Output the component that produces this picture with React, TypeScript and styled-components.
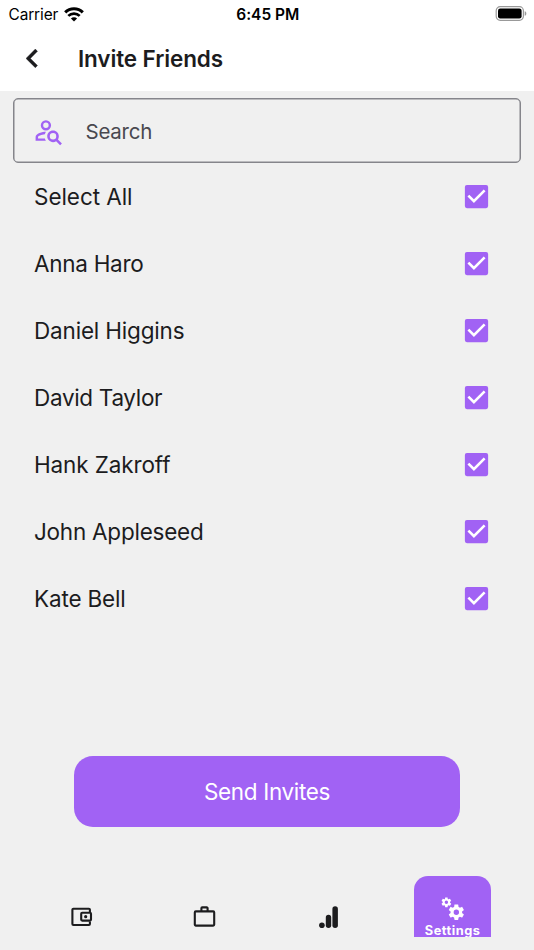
import React, { useState } from "react";
import styled, { createGlobalStyle } from "styled-components";

const PURPLE = "#a162f4";
const INK = "#1c1c1e";

const GlobalStyle = createGlobalStyle`
  *, *::before, *::after { box-sizing: border-box; }
  body {
    margin: 0;
    background: #f0f0f0;
    font-family: Inter, "Liberation Sans", sans-serif;
    color: ${INK};
  }
  button, input { font: inherit; color: inherit; }
`;

const Screen = styled.div`
  display: flex;
  flex-direction: column;
  width: 534px;
  height: 950px;
  overflow: hidden;
  background: #f0f0f0;
`;

const StatusBar = styled.div`
  display: grid;
  grid-template-columns: 1fr auto 1fr;
  align-items: center;
  height: 27px;
  padding: 0 7px 0 8.5px;
  background: #fff;
  color: #000;
`;

const Carrier = styled.div`
  display: flex;
  align-items: center;
  gap: 5.5px;
  padding-top: 1px;
  font-size: 15.4px;
  letter-spacing: -0.1px;
`;

const Clock = styled.div`
  padding-top: 1px;
  font-size: 15.5px;
  font-weight: 600;
  letter-spacing: -0.05px;
`;

const BatterySlot = styled.div`
  display: flex;
  justify-content: flex-end;
`;

const Header = styled.header`
  display: flex;
  align-items: center;
  height: 63.5px;
  padding-left: 26.2px;
  background: #fff;
`;

const BackButton = styled.button`
  display: flex;
  width: 51.8px;
  padding: 0;
  border: 0;
  background: none;
`;

const Title = styled.h1`
  margin: 0;
  font-size: 22.5px;
  font-weight: 600;
  letter-spacing: -0.12px;
`;

const SearchField = styled.label`
  display: flex;
  align-items: center;
  gap: 21.5px;
  height: 65px;
  margin: 7.5px 13px 0;
  padding-left: 19px;
  border: 1px solid #85858b;
  border-radius: 5px;
  box-shadow: inset 0 0 0 0.5px #85858b;
`;

const SearchInput = styled.input`
  flex: 1;
  min-width: 0;
  padding: 1px 0 0;
  border: 0;
  outline: 0;
  background: none;
  font-size: 20.5px;
  letter-spacing: -0.25px;
  &::placeholder { color: #49484f; opacity: 1; }
`;

const FriendList = styled.ul`
  margin: 0;
  padding: 0;
  list-style: none;
`;

const FriendRow = styled.li`
  display: flex;
  align-items: center;
  justify-content: space-between;
  height: 67.03px;
  padding: 0 41.9px 0 34px;
`;

const FriendName = styled.span<{ $tracking: number }>`
  font-size: 22.5px;
  letter-spacing: ${(p) => p.$tracking}px;
`;

const CheckButton = styled.button`
  display: flex;
  padding: 0;
  border: 0;
  background: none;
`;

const Footer = styled.div`
  display: flex;
  flex: 1;
  flex-direction: column;
  justify-content: flex-end;
`;

const SendButton = styled.button`
  align-self: center;
  width: 386.6px;
  height: 71px;
  margin-bottom: 49px;
  padding: 0;
  border: 0;
  border-radius: 19px;
  background: ${PURPLE};
  color: #fff;
  font-size: 22.5px;
  letter-spacing: -0.34px;
`;

const TabBar = styled.nav`
  display: grid;
  grid-template-columns: repeat(4, 123.6px);
  height: 61px;
  margin-bottom: 13px;
  padding-left: 20px;
  overflow: hidden;
`;

const Tab = styled.div`
  display: flex;
  justify-content: center;
  padding-top: 29px;
`;

const ActiveTab = styled.div`
  display: flex;
  flex-direction: column;
  align-items: center;
  justify-self: center;
  width: 77px;
  height: 77px;
  padding-top: 20px;
  border-radius: 14px;
  background: ${PURPLE};
  color: #fff;
`;

const TabLabel = styled.span`
  margin-top: 1px;
  font-size: 12.8px;
  font-weight: 700;
  line-height: 16px;
  letter-spacing: 0.5px;
`;

const WifiIcon = () => (
  <svg width="20" height="15" viewBox="0 0 20 15" fill="none" stroke="#000" strokeWidth="3.1">
    <path d="M1.2 5.3a12.6 12.6 0 0 1 17.6 0" />
    <path d="M4.3 8.9a8.2 8.2 0 0 1 11.4 0" strokeWidth="2.7" />
    <path d="M10 14.5 6.9 11.5a4.4 4.4 0 0 1 6.2 0z" fill="#000" stroke="none" />
  </svg>
);

const BatteryIcon = () => (
  <svg width="32" height="15" viewBox="0 0 32 15">
    <rect x="1.2" y=".7" width="27.2" height="13.6" rx="4" fill="none" stroke="#999" strokeWidth="1.2" />
    <rect x="3" y="2.5" width="23.6" height="10" rx="2.2" />
    <path d="M29.7 5.2c2.2.7 2.2 3.9 0 4.6z" fill="#999" />
  </svg>
);

const BackIcon = () => (
  <svg width="11.5" height="18.8" viewBox="8 6 7.41 12" fill={INK}>
    <path d="M15.41 16.58 10.83 12l4.58-4.59L14 6l-6 6 6 6z" stroke={INK} strokeWidth=".25" />
  </svg>
);

const PersonSearchIcon = () => (
  <svg width="31" height="31" viewBox="0 0 24 24" fill={PURPLE}>
    <path d="M10 13c-.35.59-.64 1.24-.81 1.93C6.5 15.16 3.9 16.42 3.9 17v1.1h5.3c.17.68.45 1.32.8 1.9H2v-3c0-2.66 5.33-4 8-4m0-9a4 4 0 1 1 0 8 4 4 0 0 1 0-8m0 1.9a2.1 2.1 0 1 0 0 4.2 2.1 2.1 0 0 0 0-4.2m5.5 6.1c2.5 0 4.5 2 4.5 4.5 0 .88-.25 1.71-.69 2.4l3.08 3.1L21 23.39l-3.12-3.07c-.69.43-1.51.68-2.38.68-2.5 0-4.5-2-4.5-4.5s2-4.5 4.5-4.5m0 2a2.5 2.5 0 1 0 0 5 2.5 2.5 0 0 0 0-5" />
  </svg>
);

const CheckIcon = ({ checked }: { checked: boolean }) => (
  <svg width="31" height="31" viewBox="0 0 24 24" fill={PURPLE}>
    {checked ? (
      <>
        <rect x="3" y="3" width="18" height="18" rx="1.6" />
        <path d="M10 17l-5-5 1.41-1.42L10 14.17l7.59-7.59L19 8z" fill="#fff" />
      </>
    ) : (
      <path d="M19 3H5a2 2 0 0 0-2 2v14a2 2 0 0 0 2 2h14a2 2 0 0 0 2-2V5a2 2 0 0 0-2-2m0 2v14H5V5z" />
    )}
  </svg>
);

const WalletIcon = () => (
  <svg width="24" height="24" viewBox="0 0 24 24" fill="none" stroke={INK} strokeWidth="2.1">
    <path d="M19.9 7.2V4.7a1 1 0 0 0-1-1H3.4a1 1 0 0 0-1 1v14.3a1 1 0 0 0 1 1h15.5a1 1 0 0 0 1-1v-2.4" />
    <rect x="11.2" y="7.8" width="9.8" height="7.8" rx="1" />
    <circle cx="15.7" cy="11.7" r="1.6" fill={INK} stroke="none" />
  </svg>
);

const BriefcaseIcon = () => (
  <svg width="24" height="24" viewBox="0 0 24 24" fill="none" stroke={INK} strokeWidth="2.1">
    <rect x="1.8" y="6.4" width="19.4" height="14.2" rx="1" />
    <path d="M8.4 6.4V3.2a.8.8 0 0 1 .8-.8h4.6a.8.8 0 0 1 .8.8v3.2" />
  </svg>
);

const AnalyticsIcon = () => (
  <svg width="24" height="24" viewBox="0 0 24 24" fill={INK}>
    <circle cx="4.9" cy="20.2" r="2.8" />
    <rect x="8.8" y="9.7" width="5.4" height="13.3" rx="2.7" />
    <rect x="15.4" y="1.3" width="5.5" height="21.7" rx="2.75" />
  </svg>
);

const COG =
  "M12 15.5a3.5 3.5 0 1 1 0-7 3.5 3.5 0 0 1 0 7m7.43-2.53c.04-.32.07-.64.07-.97s-.03-.66-.07-1l2.11-1.63c.19-.15.24-.42.12-.64l-2-3.46c-.12-.22-.39-.31-.61-.22l-2.49 1c-.52-.39-1.06-.73-1.69-.98l-.37-2.65A.506.506 0 0 0 14 2h-4c-.25 0-.46.18-.5.42l-.37 2.65c-.63.25-1.17.59-1.69.98l-2.49-1c-.22-.09-.49 0-.61.22l-2 3.46c-.13.22-.07.49.12.64L4.57 11c-.04.34-.07.67-.07 1s.03.65.07.97l-2.11 1.66c-.19.15-.25.42-.12.64l2 3.46c.12.22.39.3.61.22l2.49-1.01c.52.4 1.06.74 1.69.99l.37 2.65c.04.24.25.42.5.42h4c.25 0 .46-.18.5-.42l.37-2.65c.63-.26 1.17-.59 1.69-.99l2.49 1.01c.22.08.49 0 .61-.22l2-3.46c.12-.22.07-.49-.12-.64z";

const CogsIcon = () => (
  <svg width="26" height="26" viewBox="0 0 26 26" fill="#fff">
    <path transform="translate(.5 .4) scale(.49)" d={COG} />
    <path transform="translate(7.1 7) scale(.77)" d={COG} />
  </svg>
);

const FRIENDS = [
  { name: "Select All", tracking: -0.06 },
  { name: "Anna Haro", tracking: -0.28 },
  { name: "Daniel Higgins", tracking: -0.18 },
  { name: "David Taylor", tracking: -0.32 },
  { name: "Hank Zakroff", tracking: -0.12 },
  { name: "John Appleseed", tracking: -0.24 },
  { name: "Kate Bell", tracking: -0.16 },
];

export default function App() {
  const [selected, setSelected] = useState<boolean[]>(FRIENDS.map(() => true));

  const toggle = (index: number) =>
    setSelected((prev) =>
      index === 0
        ? prev.map(() => !prev[0])
        : prev.map((value, i) => (i === index ? !value : value))
    );

  return (
    <>
      <GlobalStyle />
      <Screen>
        <StatusBar>
          <Carrier>
            Carrier
            <WifiIcon />
          </Carrier>
          <Clock>6:45 PM</Clock>
          <BatterySlot>
            <BatteryIcon />
          </BatterySlot>
        </StatusBar>
        <Header>
          <BackButton aria-label="Back">
            <BackIcon />
          </BackButton>
          <Title>Invite Friends</Title>
        </Header>
        <SearchField>
          <PersonSearchIcon />
          <SearchInput placeholder="Search" />
        </SearchField>
        <FriendList>
          {FRIENDS.map(({ name, tracking }, i) => (
            <FriendRow key={name}>
              <FriendName $tracking={tracking}>{name}</FriendName>
              <CheckButton
                role="checkbox"
                aria-checked={selected[i]}
                aria-label={name}
                onClick={() => toggle(i)}
              >
                <CheckIcon checked={selected[i]} />
              </CheckButton>
            </FriendRow>
          ))}
        </FriendList>
        <Footer>
          <SendButton>Send Invites</SendButton>
          <TabBar>
            <Tab><WalletIcon /></Tab>
            <Tab><BriefcaseIcon /></Tab>
            <Tab><AnalyticsIcon /></Tab>
            <ActiveTab>
              <CogsIcon />
              <TabLabel>Settings</TabLabel>
            </ActiveTab>
          </TabBar>
        </Footer>
      </Screen>
    </>
  );
}
